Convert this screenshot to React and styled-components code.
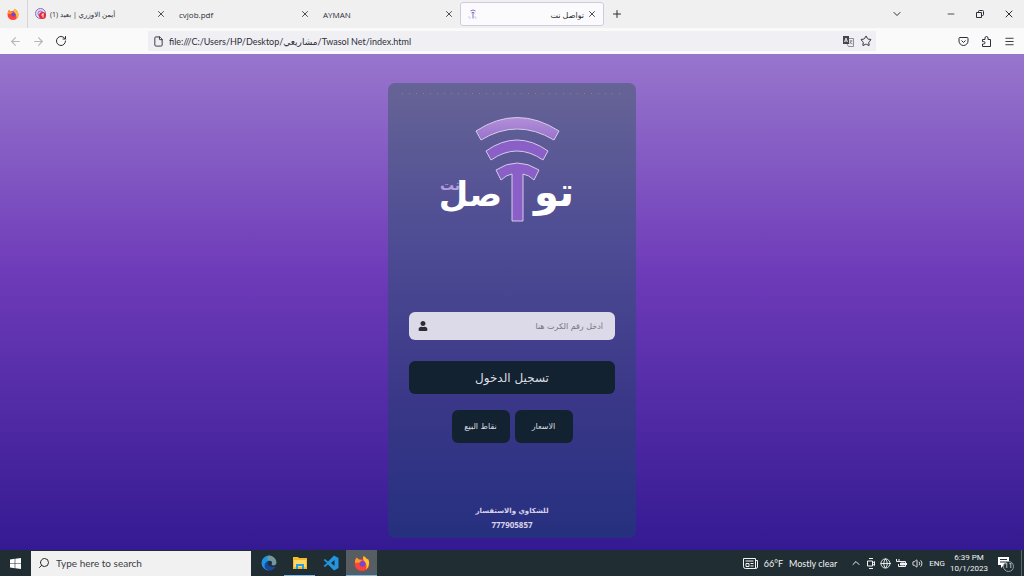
import styled, { createGlobalStyle, css } from 'styled-components'
import { FaUser } from 'react-icons/fa'
import {
  ArrowLeft, ArrowRight, RotateCw, File, Star, X, Plus, ChevronDown, ChevronUp,
  Minus, Menu, Search, Globe, Volume2,
} from 'lucide-react'

const App = () => {
  return (
    <>
      <GlobalStyle />
      <Window>
        <TabBar>
          <HomeTab aria-label="Firefox"><FirefoxLogo size={12} /></HomeTab>
          <Tab>
            <FaviconAyman />
            <TabTitle dir="rtl" $compact>أيمن الاوزري | بعيد (1)</TabTitle>
            <CloseTab />
          </Tab>
          <Tab>
            <TabTitle>cvjob.pdf</TabTitle>
            <CloseTab />
          </Tab>
          <Tab>
            <TabTitle>AYMAN</TabTitle>
            <CloseTab />
          </Tab>
          <Tab $active>
            <FaviconTwasol />
            <TabTitle dir="rtl" $right>تواصل نت</TabTitle>
            <CloseTab />
          </Tab>
          <NewTab aria-label="New tab"><Plus size={12} strokeWidth={2} /></NewTab>
          <WindowButtons>
            <IconButton aria-label="List tabs"><ChevronDown size={12} /></IconButton>
            <WindowControls>
              <IconButton aria-label="Minimize"><Minus size={10} /></IconButton>
              <IconButton aria-label="Restore"><RestoreIcon /></IconButton>
              <IconButton aria-label="Close"><X size={12} /></IconButton>
            </WindowControls>
          </WindowButtons>
        </TabBar>

        <ToolBar>
          <NavButtons>
            <IconButton aria-label="Back" disabled><ArrowLeft size={13} /></IconButton>
            <IconButton aria-label="Forward" disabled><ArrowRight size={13} /></IconButton>
            <IconButton aria-label="Reload"><RotateCw size={12} /></IconButton>
          </NavButtons>
          <AddressBar>
            <File size={11} />
            <Address aria-label="Address" defaultValue="file:///C:/Users/HP/Desktop/مشاريعي/Twasol Net/index.html" />
            <IconButton aria-label="Translate"><TranslateIcon /></IconButton>
            <IconButton aria-label="Bookmark"><Star size={12} /></IconButton>
          </AddressBar>
          <ToolButtons>
            <IconButton aria-label="Pocket"><PocketIcon /></IconButton>
            <IconButton aria-label="Extensions"><PuzzleIcon /></IconButton>
            <IconButton aria-label="Menu"><Menu size={11} /></IconButton>
          </ToolButtons>
        </ToolBar>

        <Page dir="rtl">
          <Card>
            <Dots />
            <Logo />
            <Form onSubmit={(e) => e.preventDefault()}>
              <Field>
                <CardInput aria-label="رقم الكرت" placeholder="أدخل رقم الكرت هنا" />
                <FaUser size={10} />
              </Field>
              <LoginButton>تسجيل الدخول</LoginButton>
            </Form>
            <Links>
              <SmallButton>الاسعار</SmallButton>
              <SmallButton>نقاط البيع</SmallButton>
            </Links>
            <Contact>
              <span>للشكاوي والاستفسار</span>
              <Phone>777905857</Phone>
            </Contact>
          </Card>
        </Page>

        <TaskBar>
          <TaskButton aria-label="Start"><WindowsIcon /></TaskButton>
          <SearchBox>
            <FlippedSearch size={12} />
            <SearchInput aria-label="Search" placeholder="Type here to search" />
          </SearchBox>
          <Apps>
            <TaskButton aria-label="Edge"><EdgeIcon /></TaskButton>
            <TaskButton aria-label="Explorer" $open><FolderIcon /></TaskButton>
            <TaskButton aria-label="Visual Studio Code"><CodeIcon /></TaskButton>
            <TaskButton aria-label="Firefox" $open $active><FirefoxLogo size={16} /></TaskButton>
          </Apps>
          <Tray>
            <Weather>
              <NewsIcon />
              <span>66°F</span>
              <span>Mostly clear</span>
            </Weather>
            <TrayIcons>
              <ChevronUp size={12} />
              <MeetIcon />
              <Globe size={11} />
              <BatteryIcon />
              <Volume2 size={11} />
            </TrayIcons>
            <Lang>ENG</Lang>
            <Clock>
              <span>6:39 PM</span>
              <span>10/1/2023</span>
            </Clock>
            <Notices>
              <NoticeIcon />
              <Badge>11</Badge>
            </Notices>
            <ShowDesktop aria-label="Show desktop" />
          </Tray>
        </TaskBar>
      </Window>
    </>
  )
}

const CloseTab = () => (
  <IconButton aria-label="Close tab"><X size={10} strokeWidth={2} /></IconButton>
)

const Logo = () => (
  <LogoSvg viewBox="0 0 140 110" role="img" aria-label="تواصل نت">
    <defs>
      <linearGradient id="wave" x1="0" y1="0" x2="0" y2="1">
        <stop offset="0" stopColor="#b28fd9" />
        <stop offset="1" stopColor="#9872cc" />
      </linearGradient>
    </defs>
    <g stroke="#d5cbe8" strokeWidth="1">
      <path fill="url(#wave)" d="M34 17Q75-10 117 17L112 26Q75 4 39 26Z" />
      <path fill="#8a60c8" d="M44 37Q75 15 106 37L101 46Q75 28 49 46Z" />
      <path fill="#8a60c8" d="M54 56Q75 42 97 56L92 66Q87 61 81 60V107H70V60Q64 61 59 66Z" />
    </g>
    <LogoText x="132" y="92" fontSize="40" fill="#fff">تو</LogoText>
    <LogoText x="60" y="92" fontSize="34" fill="#fff">صل</LogoText>
    <LogoText x="18" y="76" fontSize="14" fill="#b79fe0">نت</LogoText>
  </LogoSvg>
)

const FirefoxLogo = ({ size }) => (
  <svg width={size} height={size} viewBox="0 0 16 16">
    <path d="M2.500 2.500L5 4.500Q7 3.500 8.500 4.500L9.500 1Q15.500 4 15.300 9A7.300 7 0 0 1 .700 9Q.600 5 2.500 2.500z" fill="#ff4338" />
    <path d="M9.500 1Q12 2 13 4.500L14 3.800Q17 10 12 14.500Q13.500 9 10.500 6.500Q8.500 5 9.500 1z" fill="#ffc52e" />
    <path d="M2.500 2.500L5 4.500L8 5.500L6 7.500L1 8Q.800 4.500 2.500 2.500z" fill="#ff9a27" />
    <circle cx="8.500" cy="8.800" r="2.900" fill="#7148d8" />
  </svg>
)

const FaviconAyman = () => (
  <svg width="12" height="12" viewBox="0 0 12 12">
    <circle cx="5.500" cy="5.500" r="5" fill="#e8dcf8" stroke="#8b6bc0" />
    <circle cx="5.500" cy="5.500" r="2.500" fill="none" stroke="#8b6bc0" />
    <circle cx="7.500" cy="7.500" r="3.500" fill="#e62a36" />
    <path d="M6.500 7.500l1.500-2v4" fill="none" stroke="#fff" />
  </svg>
)

const FaviconTwasol = () => (
  <svg width="10" height="10" viewBox="0 0 10 10" fill="none" stroke="#8a6cc8">
    <path d="M2.500 2q2.500-2 5 0M3.500 4q1.500-1.500 3 0M5 4v5.500" />
    <path d="M1 7v2h2M7 7v2h2" stroke="#d5cde6" />
  </svg>
)

const RestoreIcon = () => (
  <svg width="8" height="8" viewBox="0 0 8 8" fill="none" stroke="currentColor">
    <path d="M.500 2.500h5v5h-5zM2.500 2.500v-1q0-1 1-1h3q1 0 1 1v3q0 1-1 1h-1" />
  </svg>
)

const TranslateIcon = () => (
  <svg width="11" height="11" viewBox="0 0 11 11" fill="none">
    <path d="M0 0h6v8H0z" fill="#45454d" />
    <path d="M1.500 6L3 2l1.500 4M2 5h2" stroke="#fff" strokeWidth=".8" />
    <path d="M6 2.500h4.500v8H5.500L4 8M6.500 5h3M8 4v1q0 2-1.500 3M7 6q1 2 2.500 2" stroke="#77777f" strokeWidth=".8" />
  </svg>
)

const PocketIcon = () => (
  <svg width="11" height="11" viewBox="0 0 11 11" fill="none" stroke="currentColor">
    <path d="M2 1.500h7q1 0 1 1v2.500a4.500 4.500 0 0 1-9 0V2.500q0-1 1-1zM3.500 4.500l2 2 2-2" />
  </svg>
)

const PuzzleIcon = () => (
  <svg width="11" height="11" viewBox="0 0 11 11" fill="none" stroke="currentColor">
    <path d="M1.500 3.500h2.500V2a1.500 1.500 0 0 1 3 0v1.500h2.500v7h-8V8h1.300a1.200 1.200 0 0 0 0-2.400H1.500z" strokeLinejoin="round" />
  </svg>
)

const WindowsIcon = () => (
  <svg width="11" height="11" viewBox="0 0 11 11" fill="#fff">
    <path d="M0 1.500l4.700-.7v4.400H0zM5.300.700L11 0v5.200H5.300zM0 5.800h4.700v4.400L0 9.500zM5.300 5.800H11V11l-5.700-.7z" />
  </svg>
)

const EdgeIcon = () => (
  <svg width="16" height="16" viewBox="0 0 16 16">
    <path d="M.500 8A7.500 7.500 0 0 1 8 .500Q13 1 13 6L8 6Q4 7 6 12L8 15.500A7.500 7.500 0 0 1 .500 8z" fill="#1c94e0" />
    <path d="M8 .500a7.500 7.500 0 0 1 7.500 7c0 3-3 3.500-5 2.500Q12 5 7 5Q5 2 8 .500z" fill="#73969f" />
    <path d="M7 6Q5 12 14.500 12Q12 16 8 15.500Q2 14 4 8.500Q5 6.500 7 6z" fill="#1b479a" />
    <circle cx="9" cy="8" r="1.800" fill="#232f37" />
  </svg>
)

const FolderIcon = () => (
  <svg width="14" height="12" viewBox="0 0 14 12">
    <path d="M0 0h5l1 1h8v11H0z" fill="#f5b92e" />
    <path d="M1 3h12v7H1z" fill="#ffd866" />
    <path d="M3 12V7h8v5H9V9H5v3z" fill="#2d9ce0" />
  </svg>
)

const CodeIcon = () => (
  <svg width="16" height="16" viewBox="0 0 16 16">
    <path d="M11 .500L15.500 3v10L11 15.500 5 9.500 2 12 .500 11 4 8 .500 5 2 4l3 2.500zM11.500 5L8 8l3.500 3z" fill="#2294e0" fillRule="evenodd" />
  </svg>
)

const NewsIcon = () => (
  <svg width="15" height="11" viewBox="0 0 15 11" fill="none" stroke="currentColor">
    <path d="M.500.500h12v10H2.500q-2 0-2-2zM12.500 2.500h2V9q0 1.500-2 1.500M2.500 3h8M3 5.500h3v3H3zM7.500 5.500h3M7.500 8h3" />
  </svg>
)

const MeetIcon = () => (
  <svg width="8" height="11" viewBox="0 0 8 11" fill="none" stroke="currentColor">
    <path d="M2 .500h4M2 10.500h4M.500 3h5v5h-5zM5.500 5l2-1.500v4l-2-1.500" />
  </svg>
)

const BatteryIcon = () => (
  <svg width="11" height="9" viewBox="0 0 11 9" fill="none" stroke="currentColor">
    <path d="M3 2.500h6.500v5H2.500V5M10.500 4v2M.500 0v2.500h2.500V0" />
    <path d="M4.500 4h4v2h-4z" fill="currentColor" />
  </svg>
)

const NoticeIcon = () => (
  <svg width="12" height="12" viewBox="0 0 12 12">
    <path d="M0 0h11v8H6l-3 3V8H0z" fill="#fff" />
    <path d="M2 2.500h7M2 5h7" stroke="#232f37" />
  </svg>
)

const GlobalStyle = createGlobalStyle`
  * {
    box-sizing: border-box;
  }

  body {
    margin: 0;
    font-family: "Open Sans", "DejaVu Sans", sans-serif;
    font-size: 8px;
    color: #2d2d35;
  }

  button, input {
    font-family: inherit;
    color: inherit;
    border: 0;
    padding: 0;
    background: none;
    outline: none;
  }

  svg {
    flex-shrink: 0;
  }
`

const Window = styled.div`
  display: flex;
  flex-direction: column;
  min-height: 100vh;
`

const TabBar = styled.header`
  display: flex;
  align-items: center;
  height: 28px;
  background: #f0f0f1;
`

const HomeTab = styled.button`
  display: flex;
  align-items: center;
  justify-content: center;
  width: 28px;
  height: 28px;
  padding-right: 2px;
  border-right: 1px solid #d4d2de;
`

const Tab = styled.div`
  display: flex;
  align-items: center;
  gap: 3px;
  flex: 0 1 144px;
  height: 24px;
  padding: 0 3px 0 7px;

  ${({ $active }) => $active && css`
    background: #fbfbfe;
    border: 1px solid #cfcae0;
    border-radius: 3px;
  `}
`

const TabTitle = styled.span`
  flex: 1;
  font-size: ${({ $compact }) => ($compact ? '7px' : '8px')};
  text-align: ${({ $right }) => ($right ? 'right' : 'left')};
  white-space: nowrap;

  /* the rtl title hugs the close button */
  ${({ $right }) => $right && css`
    direction: ltr;
    margin-right: -3px;
  `}
`

const IconButton = styled.button`
  display: flex;
  align-items: center;
  justify-content: center;
  width: 16px;
  height: 16px;

  &:disabled {
    color: #b5b5ba;
  }
`

const NewTab = styled(IconButton)`
  margin-left: 5px;
`

const WindowButtons = styled.div`
  display: flex;
  gap: 38px;
  margin-left: auto;
  padding-right: 7px;
`

const WindowControls = styled.div`
  display: flex;
  gap: 13px;
`

const ToolBar = styled.nav`
  display: flex;
  align-items: center;
  height: 26px;
  background: #fafafb;
`

const NavButtons = styled.div`
  display: flex;
  gap: 7px;
  padding-left: 7px;
`

const AddressBar = styled.div`
  display: flex;
  align-items: center;
  gap: 2px;
  flex: 1;
  height: 20px;
  margin-left: 79px;
  padding: 0 2px 0 5px;
  background: #f0f0f4;
`

const Address = styled.input`
  flex: 1;
  padding-left: 3px;
  font-family: Lato, "DejaVu Sans", sans-serif;
  font-size: 9px;
`

const ToolButtons = styled.div`
  display: flex;
  gap: 7px;
  padding: 0 7px 0 79px;
`

const Page = styled.main`
  display: flex;
  align-items: center;
  justify-content: center;
  flex: 1;
  padding: 29px 0 12px;
  font-family: "DejaVu Sans", sans-serif;
  background: linear-gradient(#9876cd, #6d3ab8 45%, #341a92);
`

const Card = styled.section`
  display: flex;
  flex-direction: column;
  align-items: center;
  align-self: stretch;
  width: 248px;
  padding: 10px 21px 6px;
  border-radius: 7px;
  background: linear-gradient(#666496, #4f4d94 33%, #3a3788 70%, #26307f);
`

const Dots = styled.div`
  align-self: stretch;
  height: 1px;
  margin: 0 -7px;
  background: repeating-linear-gradient(90deg, #8c8768 0 1px, transparent 1px 7px);
`

const LogoSvg = styled.svg`
  width: 140px;
  height: 110px;
  margin: 20px 0 88px;
  overflow: visible;
`

const LogoText = styled.text`
  font-family: "DejaVu Sans", sans-serif;
  font-weight: bold;
  direction: rtl;
`

const Form = styled.form`
  display: flex;
  flex-direction: column;
  gap: 21px;
  width: 100%;
`

const Field = styled.label`
  display: flex;
  align-items: center;
  height: 28px;
  padding: 0 12px 0 9px;
  border-radius: 6px;
  background: #dcd9e8;
`

const CardInput = styled.input`
  flex: 1;
  min-width: 0;
  font-size: 8px;

  &::placeholder {
    color: #75747c;
  }
`

const LoginButton = styled.button`
  height: 33px;
  border-radius: 6px;
  background: #122231;
  color: #dcdce0;
  font-size: 12px;
`

const Links = styled.div`
  display: flex;
  gap: 5px;
  margin-top: 16px;
`

const SmallButton = styled.button`
  width: 58px;
  height: 33px;
  border-radius: 6px;
  background: #122231;
  color: #dcdce0;
  font-size: 8px;
`

const Contact = styled.p`
  display: flex;
  flex-direction: column;
  align-items: center;
  margin: auto 0 0;
  color: #d9d3ea;
  font-size: 7px;
  font-weight: bold;
  line-height: 14px;
`

const Phone = styled.span`
  font-family: "Open Sans", sans-serif;
  font-size: 8px;
`

const TaskBar = styled.footer`
  display: flex;
  align-items: center;
  height: 26px;
  background: #202d33;
  color: #f2f2f2;
`

const TaskButton = styled.button`
  display: flex;
  align-items: center;
  justify-content: center;
  width: 31px;
  height: 26px;
  background: ${({ $active }) => ($active ? '#565d63' : 'none')};
  border-bottom: ${({ $open }) => ($open ? '1px solid #76b9ed' : '0')};
`

const SearchBox = styled.label`
  display: flex;
  align-items: center;
  gap: 6px;
  width: 220px;
  height: 25px;
  padding: 0 7px;
  background: #f1f1f1;
  color: #2b2b2b;
`

const FlippedSearch = styled(Search)`
  transform: scaleX(-1);
`

const SearchInput = styled.input`
  flex: 1;
  font-family: Lato, sans-serif;
  font-size: 10px;

  &::placeholder {
    color: #3c3c46;
  }
`

const Apps = styled.div`
  display: flex;
  padding-left: 2px;
`

const Tray = styled.div`
  display: flex;
  align-items: center;
  margin-left: auto;
`

const Weather = styled.div`
  display: flex;
  align-items: center;
  gap: 6px;
  font-family: Lato, sans-serif;
  font-size: 9px;
`

const TrayIcons = styled.div`
  display: flex;
  align-items: center;
  gap: 5px;
  padding: 0 6px 0 13px;
`

const Lang = styled.span`
  font-family: Roboto, sans-serif;
  font-size: 8px;
`

const Clock = styled.time`
  display: flex;
  flex-direction: column;
  align-items: center;
  margin: 0 10px 0 5px;
  font-family: Roboto, sans-serif;
  font-size: 8px;
  line-height: 11px;
`

const Notices = styled.div`
  position: relative;
  display: flex;
  margin-right: 11px;
`

const Badge = styled.span`
  position: absolute;
  left: 5px;
  top: 4px;
  width: 11px;
  height: 11px;
  border: 1px solid #9aa0a4;
  border-radius: 50%;
  background: #202d33;
  font-family: Roboto, sans-serif;
  font-size: 7px;
  line-height: 9px;
  text-align: center;
`

const ShowDesktop = styled.button`
  width: 3px;
  height: 26px;
  border-left: 1px solid #5c666b;
`

export default App
